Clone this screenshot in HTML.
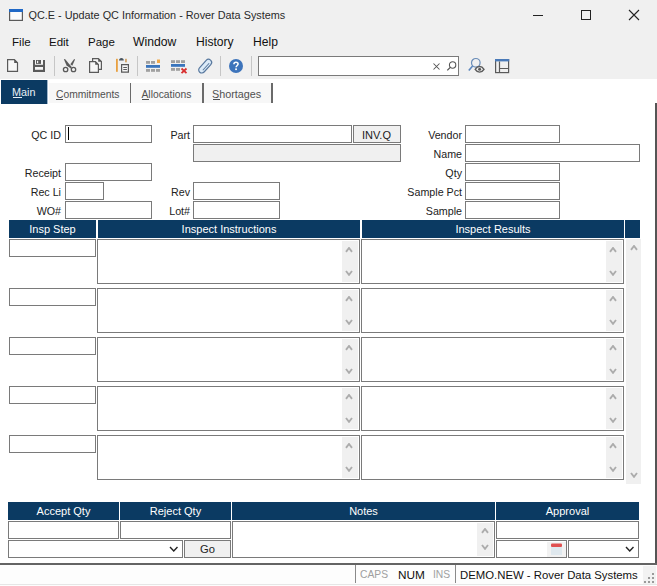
<!DOCTYPE html>
<html><head><meta charset="utf-8">
<style>
*{box-sizing:border-box;margin:0;padding:0}
html,body{width:657px;height:586px;overflow:hidden;background:#fff;font-family:"Liberation Sans",sans-serif;color:#000}
.a{position:absolute}
.t{position:absolute;white-space:pre;line-height:1}
.box{position:absolute;border:1px solid #7a7a7a;background:#fff}
.dis{background:#f0f0f0}
.hdr{position:absolute;background:#0b3a62;color:#fff;font-size:11px;text-align:center;line-height:18px;white-space:pre}
.lbl{position:absolute;font-size:10.7px;color:#222;text-align:right;white-space:pre;line-height:1}
.sb{position:absolute;background:#f0f0f0}
.tab{position:absolute;font-size:10.3px;color:#505050;white-space:pre;line-height:1}
.tsep{position:absolute;background:#6a6a6a;width:2px}
u{text-decoration:none;border-bottom:1px solid currentColor;display:inline-block;line-height:1;padding-bottom:0}
</style></head><body>
<div class="a" style="left:0;top:0;width:657px;height:79px;background:#f0f0f0"></div>

<svg class="a" style="left:9px;top:9px" width="14" height="12" viewBox="0 0 14 12"><rect x="0.6" y="0.6" width="12.8" height="10.8" fill="#fafbfc" stroke="#5a5a5a" stroke-width="1.2"/><rect x="0" y="0" width="14" height="3" fill="#1f68c6"/></svg>
<div class="t" style="left:28.5px;top:10px;font-size:10.85px;color:#2a2a2a">QC.E - Update QC Information - Rover Data Systems</div>
<div class="a" style="left:533px;top:15px;width:10px;height:1px;background:#222"></div>
<div class="a" style="left:581px;top:10px;width:10px;height:10px;border:1px solid #222"></div>
<svg class="a" style="left:628px;top:9px" width="12" height="12" viewBox="0 0 12 12"><path d="M1 1L11 11M11 1L1 11" stroke="#222" stroke-width="1.1"/></svg>

<div class="a" style="left:12px;top:35px;height:14px;display:flex;align-items:baseline;white-space:pre;color:#111;line-height:14px">
<span style="display:inline-block;width:37px;font-size:11.6px">File</span>
<span style="display:inline-block;width:39px;font-size:11.5px">Edit</span>
<span style="display:inline-block;width:45px;font-size:11.5px">Page</span>
<span style="display:inline-block;width:63px;font-size:12.2px">Window</span>
<span style="display:inline-block;width:57px;font-size:12.1px">History</span>
<span style="display:inline-block;width:40px;font-size:12.1px">Help</span>
</div>
<!-- new doc (7..18, 59..72) -->
<svg class="a" style="left:6px;top:58px" width="14" height="15" viewBox="0 0 14 15"><path d="M1.6 1.6H8.4L11.5 4.7V13.4H1.6Z" fill="#f8f8f8" stroke="#5a5a5a" stroke-width="1.2"/><path d="M8.2 1.2L12 5H8.2Z" fill="#5a5a5a"/></svg>
<!-- save (33..45, 60..72) -->
<svg class="a" style="left:33px;top:60px" width="12" height="12" viewBox="0 0 12 12"><rect x="0" y="0" width="12" height="12" fill="#5a5a5a"/><rect x="2" y="0" width="8" height="4.8" fill="#f4f4f4"/><rect x="3" y="0" width="5" height="3.9" fill="#5a5a5a"/><rect x="4" y="0.8" width="1.2" height="2.3" fill="#f4f4f4"/><rect x="2" y="7" width="8" height="2.8" fill="#f4f4f4"/></svg>
<div class="a" style="left:54px;top:56px;width:1px;height:20px;background:#c6c6c6"></div>
<!-- scissors (62..76, 59..72) -->
<svg class="a" style="left:60px;top:56px" width="20" height="18" viewBox="0 0 20 18"><path d="M3.9 3.3L5.0 3.1L11.9 11.3L10.8 12.5L6.6 9.6Z" fill="#5a5a5a"/><path d="M14.2 3.1L15.0 3.5L12.3 9.7L10.3 8.3Z" fill="#5a5a5a"/><circle cx="5.6" cy="13.5" r="2.2" fill="none" stroke="#5a5a5a" stroke-width="1.3"/><circle cx="13.5" cy="13.5" r="2.2" fill="none" stroke="#5a5a5a" stroke-width="1.3"/></svg>
<!-- copy -->
<svg class="a" style="left:88px;top:57px" width="16" height="17" viewBox="0 0 16 17"><path d="M4.6 1.6H10.4L13.4 4.6V12.4H4.6Z" fill="#f6f6f6" stroke="#5a5a5a" stroke-width="1.2"/><path d="M10.2 1.2L13.8 4.8H10.2Z" fill="#5a5a5a"/><path d="M1.6 4.6H7.4L10.4 7.6V15.4H1.6Z" fill="#f6f6f6" stroke="#5a5a5a" stroke-width="1.2"/><path d="M7.2 4.2L10.8 7.8H7.2Z" fill="#5a5a5a"/></svg>
<!-- paste -->
<svg class="a" style="left:112px;top:55px" width="20" height="20" viewBox="0 0 20 20"><rect x="4" y="3.8" width="1.8" height="13" fill="#e8a040"/><rect x="13.1" y="3.8" width="1.7" height="3.5" fill="#d0a060"/><path d="M7 5.6C7 4 8 3 9.4 3C10.8 3 11.8 4 11.8 5.6Z" fill="#4a5560"/><path d="M9.6 9.6H16.4V17.2H9.6Z" fill="#f6f6f6" stroke="#5a5a5a" stroke-width="1.2"/><path d="M11.3 12.5H14.9M11.3 14.5H14.9" stroke="#5a5a5a" stroke-width="1.1"/></svg>
<div class="a" style="left:137px;top:56px;width:1px;height:20px;background:#c6c6c6"></div>
<!-- list add -->
<svg class="a" style="left:145px;top:59px" width="16" height="14" viewBox="0 0 16 14"><rect x="1" y="2" width="4" height="2.8" fill="#a0a0a0"/><rect x="6" y="2" width="4" height="2.8" fill="#a0a0a0"/><rect x="12" y="0.5" width="3" height="3.5" fill="#f0a848"/><rect x="1" y="6" width="14" height="2.8" fill="#3a75bd"/><rect x="1" y="10" width="4" height="2.8" fill="#a0a0a0"/><rect x="6" y="10" width="4" height="2.8" fill="#a0a0a0"/><rect x="11" y="10" width="4" height="2.8" fill="#a0a0a0"/></svg>
<!-- list delete -->
<svg class="a" style="left:170px;top:59px" width="18" height="15" viewBox="0 0 18 15"><rect x="1" y="1.2" width="4" height="2.8" fill="#a0a0a0"/><rect x="6" y="1.2" width="4" height="2.8" fill="#a0a0a0"/><rect x="11" y="1.2" width="4" height="2.8" fill="#a0a0a0"/><rect x="1" y="5" width="14" height="2.8" fill="#3a75bd"/><rect x="1" y="9" width="4" height="2.8" fill="#a0a0a0"/><rect x="6" y="9" width="4" height="2.8" fill="#a0a0a0"/><path d="M11.5 9.5L16.5 14.2M16.5 9.5L11.5 14.2" stroke="#d83030" stroke-width="1.8"/></svg>
<!-- paperclip -->
<svg class="a" style="left:195px;top:55.8px" width="20" height="20" viewBox="0 0 20 20"><g transform="rotate(-48 10 10.2)"><rect x="2" y="7.2" width="16.2" height="6.2" rx="3.1" fill="#dcebf8" stroke="#58789e" stroke-width="1.2"/><path d="M15 11.3H5.5" fill="none" stroke="#58789e" stroke-width="1"/></g></svg>
<div class="a" style="left:220px;top:56px;width:1px;height:20px;background:#c6c6c6"></div>
<!-- help -->
<svg class="a" style="left:229px;top:59px" width="14" height="14" viewBox="0 0 14 14"><circle cx="7" cy="7" r="7" fill="#3d74bb"/><path d="M4.9 5.3C4.9 4 5.8 3.2 7 3.2C8.2 3.2 9.1 4 9.1 5.1C9.1 6.5 7.1 6.6 7.1 8.3" fill="none" stroke="#fff" stroke-width="1.5"/><rect x="6.2" y="9.4" width="1.7" height="1.7" fill="#fff"/></svg>
<div class="a" style="left:251px;top:56px;width:1px;height:20px;background:#c6c6c6"></div>
<!-- search -->
<div class="a" style="left:258px;top:56px;width:201px;height:20px;background:#fff;border:1px solid #7a7a7a"></div>
<svg class="a" style="left:431.6px;top:61.6px" width="9" height="9" viewBox="0 0 9 9"><path d="M1.5 1.5L7.5 7.5M7.5 1.5L1.5 7.5" stroke="#555" stroke-width="1.05"/></svg>
<svg class="a" style="left:446px;top:60px" width="12" height="12" viewBox="0 0 12 12"><circle cx="6.6" cy="5.0" r="3.2" fill="none" stroke="#555" stroke-width="1.05"/><path d="M4.3 7.4L1.3 10.4" stroke="#555" stroke-width="1.3"/></svg>
<!-- magnifier eye -->
<svg class="a" style="left:467px;top:57px" width="18" height="17" viewBox="0 0 18 17"><circle cx="8.8" cy="5.8" r="4.3" fill="none" stroke="#6a8db8" stroke-width="1.2"/><path d="M5.6 9L1.8 13.4" stroke="#5b86bd" stroke-width="1.6"/><path d="M8.2 12.3C9.4 10.4 10.8 9.5 12.6 9.5C14.4 9.5 15.8 10.4 17 12.3C15.8 14.2 14.4 15.1 12.6 15.1C10.8 15.1 9.4 14.2 8.2 12.3Z" fill="#f0f0f0" stroke="#5a5a5a" stroke-width="1.4"/><circle cx="12.6" cy="12.3" r="1.5" fill="#5a5a5a"/></svg>
<!-- layout -->
<svg class="a" style="left:494px;top:58px" width="16" height="16" viewBox="0 0 16 16"><rect x="1.6" y="1.6" width="13" height="13" fill="none" stroke="#5a5a5a" stroke-width="1.2"/><rect x="1" y="1" width="14.2" height="2.4" fill="#4a7ab8"/><path d="M5.5 3.4V14.6M5.5 10.5H14.6" stroke="#5a5a5a" stroke-width="1.2"/></svg>

<div class="a" style="left:1px;top:80px;width:47px;height:24px;background:#0b3a62;border-right:1px solid #9fb6cc"></div>
<div class="tab" style="left:12px;top:87px;color:#e8f0f6;font-size:10.8px">Main</div>
<div class="a" style="left:13px;top:97px;width:9px;height:1px;background:#e8f0f6"></div>
<div class="a" style="left:49px;top:83px;width:222px;height:20px;background:#f7f7f7"></div>
<div class="tab" style="left:56px;top:90px">Commitments</div>
<div class="a" style="left:56px;top:99px;width:7px;height:1px;background:#505050"></div>
<div class="tsep" style="left:129.5px;top:83px;height:20px;width:1.6px"></div>
<div class="tab" style="left:141.5px;top:90px">Allocations</div>
<div class="a" style="left:141.5px;top:99px;width:7px;height:1px;background:#505050"></div>
<div class="tsep" style="left:202px;top:83px;height:20px;width:1.6px"></div>
<div class="tab" style="left:212px;top:89px;font-size:10.8px">Shortages</div>
<div class="a" style="left:212.5px;top:99px;width:7px;height:1px;background:#505050"></div>
<div class="tsep" style="left:271.2px;top:83px;height:20px;width:1.6px"></div>

<div class="a" style="left:655px;top:103px;width:2px;height:461px;background:#555"></div>
<div class="lbl" style="left:-59px;width:120px;top:130px">QC ID</div>
<div class="box" style="left:65px;top:125px;width:87px;height:18px"></div>
<div class="a" style="left:68px;top:127px;width:1px;height:13px;background:#000"></div>
<div class="lbl" style="left:-59px;width:120px;top:168px">Receipt</div>
<div class="box" style="left:65px;top:163px;width:87px;height:18px"></div>
<div class="lbl" style="left:-59px;width:120px;top:187px">Rec Li</div>
<div class="box" style="left:65px;top:182px;width:39px;height:18px"></div>
<div class="lbl" style="left:-59px;width:120px;top:206px">WO#</div>
<div class="box" style="left:65px;top:201px;width:87px;height:18px"></div>
<div class="lbl" style="left:70px;width:120px;top:130px">Part</div>
<div class="box" style="left:193px;top:125px;width:159px;height:18px"></div>
<div class="box dis" style="left:353px;top:125px;width:48px;height:18px"></div>
<div class="t" style="left:362px;top:130px;font-size:11px;color:#222">INV.Q</div>
<div class="box dis" style="left:193px;top:144px;width:208px;height:18px"></div>
<div class="lbl" style="left:70px;width:120px;top:187px">Rev</div>
<div class="box" style="left:193px;top:182px;width:87px;height:18px"></div>
<div class="lbl" style="left:70px;width:120px;top:206px">Lot#</div>
<div class="box" style="left:193px;top:201px;width:87px;height:18px"></div>
<div class="lbl" style="left:342px;width:120px;top:130px">Vendor</div>
<div class="box" style="left:465px;top:125px;width:95px;height:18px"></div>
<div class="lbl" style="left:342px;width:120px;top:149px">Name</div>
<div class="box" style="left:465px;top:144px;width:175px;height:18px"></div>
<div class="lbl" style="left:342px;width:120px;top:168px">Qty</div>
<div class="box" style="left:465px;top:163px;width:95px;height:18px"></div>
<div class="lbl" style="left:342px;width:120px;top:187px">Sample Pct</div>
<div class="box" style="left:465px;top:182px;width:95px;height:18px"></div>
<div class="lbl" style="left:342px;width:120px;top:206px">Sample</div>
<div class="box" style="left:465px;top:201px;width:95px;height:18px"></div>
<div class="hdr" style="left:9px;top:220px;width:87px;height:18px">Insp Step</div>
<div class="hdr" style="left:98px;top:220px;width:262px;height:18px">Inspect Instructions</div>
<div class="hdr" style="left:362px;top:220px;width:262px;height:18px">Inspect Results</div>
<div class="hdr" style="left:625px;top:220px;width:15px;height:18px"></div>
<div class="sb" style="left:626px;top:239px;width:15px;height:245px"></div>
<svg class="a" style="left:629.6px;top:245.2px" width="8" height="5.8" viewBox="0 0 8 5.8"><path d="M1 4.8L4.0 1L7 4.8" fill="none" stroke="#acacac" stroke-width="1.9"/></svg>
<svg class="a" style="left:629.6px;top:472.3px" width="8" height="5.8" viewBox="0 0 8 5.8"><path d="M1 1L4.0 4.8L7 1" fill="none" stroke="#acacac" stroke-width="1.9"/></svg>
<div class="box" style="left:9px;top:239px;width:87px;height:18px"></div>
<div class="box" style="left:97px;top:239px;width:263px;height:45px"></div>
<div class="sb" style="left:342px;top:241px;width:16px;height:41px"></div>
<svg class="a" style="left:345.3px;top:246.8px" width="8" height="5.8" viewBox="0 0 8 5.8"><path d="M1 4.8L4.0 1L7 4.8" fill="none" stroke="#acacac" stroke-width="1.9"/></svg>
<svg class="a" style="left:345.3px;top:270px" width="8" height="5.8" viewBox="0 0 8 5.8"><path d="M1 1L4.0 4.8L7 1" fill="none" stroke="#acacac" stroke-width="1.9"/></svg>
<div class="box" style="left:361px;top:239px;width:263px;height:45px"></div>
<div class="sb" style="left:606px;top:241px;width:16px;height:41px"></div>
<svg class="a" style="left:609.3px;top:246.8px" width="8" height="5.8" viewBox="0 0 8 5.8"><path d="M1 4.8L4.0 1L7 4.8" fill="none" stroke="#acacac" stroke-width="1.9"/></svg>
<svg class="a" style="left:609.3px;top:270px" width="8" height="5.8" viewBox="0 0 8 5.8"><path d="M1 1L4.0 4.8L7 1" fill="none" stroke="#acacac" stroke-width="1.9"/></svg>
<div class="box" style="left:9px;top:288px;width:87px;height:18px"></div>
<div class="box" style="left:97px;top:288px;width:263px;height:45px"></div>
<div class="sb" style="left:342px;top:290px;width:16px;height:41px"></div>
<svg class="a" style="left:345.3px;top:295.8px" width="8" height="5.8" viewBox="0 0 8 5.8"><path d="M1 4.8L4.0 1L7 4.8" fill="none" stroke="#acacac" stroke-width="1.9"/></svg>
<svg class="a" style="left:345.3px;top:319px" width="8" height="5.8" viewBox="0 0 8 5.8"><path d="M1 1L4.0 4.8L7 1" fill="none" stroke="#acacac" stroke-width="1.9"/></svg>
<div class="box" style="left:361px;top:288px;width:263px;height:45px"></div>
<div class="sb" style="left:606px;top:290px;width:16px;height:41px"></div>
<svg class="a" style="left:609.3px;top:295.8px" width="8" height="5.8" viewBox="0 0 8 5.8"><path d="M1 4.8L4.0 1L7 4.8" fill="none" stroke="#acacac" stroke-width="1.9"/></svg>
<svg class="a" style="left:609.3px;top:319px" width="8" height="5.8" viewBox="0 0 8 5.8"><path d="M1 1L4.0 4.8L7 1" fill="none" stroke="#acacac" stroke-width="1.9"/></svg>
<div class="box" style="left:9px;top:337px;width:87px;height:18px"></div>
<div class="box" style="left:97px;top:337px;width:263px;height:45px"></div>
<div class="sb" style="left:342px;top:339px;width:16px;height:41px"></div>
<svg class="a" style="left:345.3px;top:344.8px" width="8" height="5.8" viewBox="0 0 8 5.8"><path d="M1 4.8L4.0 1L7 4.8" fill="none" stroke="#acacac" stroke-width="1.9"/></svg>
<svg class="a" style="left:345.3px;top:368px" width="8" height="5.8" viewBox="0 0 8 5.8"><path d="M1 1L4.0 4.8L7 1" fill="none" stroke="#acacac" stroke-width="1.9"/></svg>
<div class="box" style="left:361px;top:337px;width:263px;height:45px"></div>
<div class="sb" style="left:606px;top:339px;width:16px;height:41px"></div>
<svg class="a" style="left:609.3px;top:344.8px" width="8" height="5.8" viewBox="0 0 8 5.8"><path d="M1 4.8L4.0 1L7 4.8" fill="none" stroke="#acacac" stroke-width="1.9"/></svg>
<svg class="a" style="left:609.3px;top:368px" width="8" height="5.8" viewBox="0 0 8 5.8"><path d="M1 1L4.0 4.8L7 1" fill="none" stroke="#acacac" stroke-width="1.9"/></svg>
<div class="box" style="left:9px;top:386px;width:87px;height:18px"></div>
<div class="box" style="left:97px;top:386px;width:263px;height:45px"></div>
<div class="sb" style="left:342px;top:388px;width:16px;height:41px"></div>
<svg class="a" style="left:345.3px;top:393.8px" width="8" height="5.8" viewBox="0 0 8 5.8"><path d="M1 4.8L4.0 1L7 4.8" fill="none" stroke="#acacac" stroke-width="1.9"/></svg>
<svg class="a" style="left:345.3px;top:417px" width="8" height="5.8" viewBox="0 0 8 5.8"><path d="M1 1L4.0 4.8L7 1" fill="none" stroke="#acacac" stroke-width="1.9"/></svg>
<div class="box" style="left:361px;top:386px;width:263px;height:45px"></div>
<div class="sb" style="left:606px;top:388px;width:16px;height:41px"></div>
<svg class="a" style="left:609.3px;top:393.8px" width="8" height="5.8" viewBox="0 0 8 5.8"><path d="M1 4.8L4.0 1L7 4.8" fill="none" stroke="#acacac" stroke-width="1.9"/></svg>
<svg class="a" style="left:609.3px;top:417px" width="8" height="5.8" viewBox="0 0 8 5.8"><path d="M1 1L4.0 4.8L7 1" fill="none" stroke="#acacac" stroke-width="1.9"/></svg>
<div class="box" style="left:9px;top:435px;width:87px;height:18px"></div>
<div class="box" style="left:97px;top:435px;width:263px;height:45px"></div>
<div class="sb" style="left:342px;top:437px;width:16px;height:41px"></div>
<svg class="a" style="left:345.3px;top:442.8px" width="8" height="5.8" viewBox="0 0 8 5.8"><path d="M1 4.8L4.0 1L7 4.8" fill="none" stroke="#acacac" stroke-width="1.9"/></svg>
<svg class="a" style="left:345.3px;top:466px" width="8" height="5.8" viewBox="0 0 8 5.8"><path d="M1 1L4.0 4.8L7 1" fill="none" stroke="#acacac" stroke-width="1.9"/></svg>
<div class="box" style="left:361px;top:435px;width:263px;height:45px"></div>
<div class="sb" style="left:606px;top:437px;width:16px;height:41px"></div>
<svg class="a" style="left:609.3px;top:442.8px" width="8" height="5.8" viewBox="0 0 8 5.8"><path d="M1 4.8L4.0 1L7 4.8" fill="none" stroke="#acacac" stroke-width="1.9"/></svg>
<svg class="a" style="left:609.3px;top:466px" width="8" height="5.8" viewBox="0 0 8 5.8"><path d="M1 1L4.0 4.8L7 1" fill="none" stroke="#acacac" stroke-width="1.9"/></svg>
<div class="hdr" style="left:8px;top:502px;width:111px;height:18px">Accept Qty</div>
<div class="hdr" style="left:120px;top:502px;width:111px;height:18px">Reject Qty</div>
<div class="hdr" style="left:232px;top:502px;width:263px;height:18px">Notes</div>
<div class="hdr" style="left:496px;top:502px;width:143px;height:18px">Approval</div>
<div class="box" style="left:8px;top:521px;width:111px;height:18px"></div>
<div class="box" style="left:120px;top:521px;width:111px;height:18px"></div>
<div class="box" style="left:8px;top:540px;width:175px;height:18px"></div>
<svg class="a" style="left:168.5px;top:546px" width="9.5" height="6" viewBox="0 0 9.5 6"><path d="M1 1L4.75 5L8.5 1" fill="none" stroke="#222" stroke-width="1.4"/></svg>
<div class="box dis" style="left:184px;top:540px;width:47px;height:18px"></div>
<div class="t" style="left:200px;top:544px;font-size:11.2px;color:#222">Go</div>
<div class="box" style="left:232px;top:521px;width:263px;height:37px"></div>
<div class="sb" style="left:477px;top:523px;width:16px;height:33px"></div>
<svg class="a" style="left:480.5px;top:528px" width="8" height="5.8" viewBox="0 0 8 5.8"><path d="M1 4.8L4.0 1L7 4.8" fill="none" stroke="#acacac" stroke-width="1.9"/></svg>
<svg class="a" style="left:480.5px;top:544px" width="8" height="5.8" viewBox="0 0 8 5.8"><path d="M1 1L4.0 4.8L7 1" fill="none" stroke="#acacac" stroke-width="1.9"/></svg>
<div class="box" style="left:496px;top:521px;width:143px;height:18px"></div>
<div class="box" style="left:496px;top:540px;width:71px;height:18px"></div>
<div class="a" style="left:547px;top:542px;width:19px;height:15px;background:#f2f2f2"></div>
<svg class="a" style="left:550px;top:542px" width="13" height="14" viewBox="0 0 13 14"><rect x="1" y="1.5" width="11" height="3.5" rx="1" fill="#e05050"/><rect x="1" y="5" width="11" height="8" fill="#dfe8ee"/></svg>
<div class="box" style="left:568px;top:540px;width:71px;height:18px"></div>
<svg class="a" style="left:624.5px;top:546px" width="9.5" height="6" viewBox="0 0 9.5 6"><path d="M1 1L4.75 5L8.5 1" fill="none" stroke="#222" stroke-width="1.4"/></svg>
<div class="a" style="left:0;top:563px;width:657px;height:2px;background:#646464"></div>
<div class="a" style="left:0;top:565px;width:657px;height:21px;background:#fdfdfd"></div>
<div class="a" style="left:0;top:584px;width:657px;height:1px;background:#e6e6e6"></div>
<div class="a" style="left:355px;top:565px;width:1px;height:18px;background:#8a8a8a"></div>
<div class="t" style="left:360px;top:570px;font-size:10.3px;color:#a0a0a0">CAPS</div>
<div class="t" style="left:398px;top:569.5px;font-size:11.8px;color:#111">NUM</div>
<div class="t" style="left:433px;top:570px;font-size:10.3px;color:#a0a0a0">INS</div>
<div class="a" style="left:455px;top:565px;width:1px;height:18px;background:#8a8a8a"></div>
<div class="t" style="left:460px;top:570px;font-size:11.35px;color:#111">DEMO.NEW - Rover Data Systems</div>
<div class="a" style="left:643px;top:566px;width:13px;height:18px;background:#f2f2f2"></div>

<div class="a" style="left:652px;top:573px;width:2px;height:2px;background:#9a9a9a"></div>
<div class="a" style="left:648px;top:577px;width:2px;height:2px;background:#9a9a9a"></div>
<div class="a" style="left:652px;top:577px;width:2px;height:2px;background:#9a9a9a"></div>
<div class="a" style="left:644px;top:581px;width:2px;height:2px;background:#9a9a9a"></div>
<div class="a" style="left:648px;top:581px;width:2px;height:2px;background:#9a9a9a"></div>
<div class="a" style="left:652px;top:581px;width:2px;height:2px;background:#9a9a9a"></div>
</body></html>
